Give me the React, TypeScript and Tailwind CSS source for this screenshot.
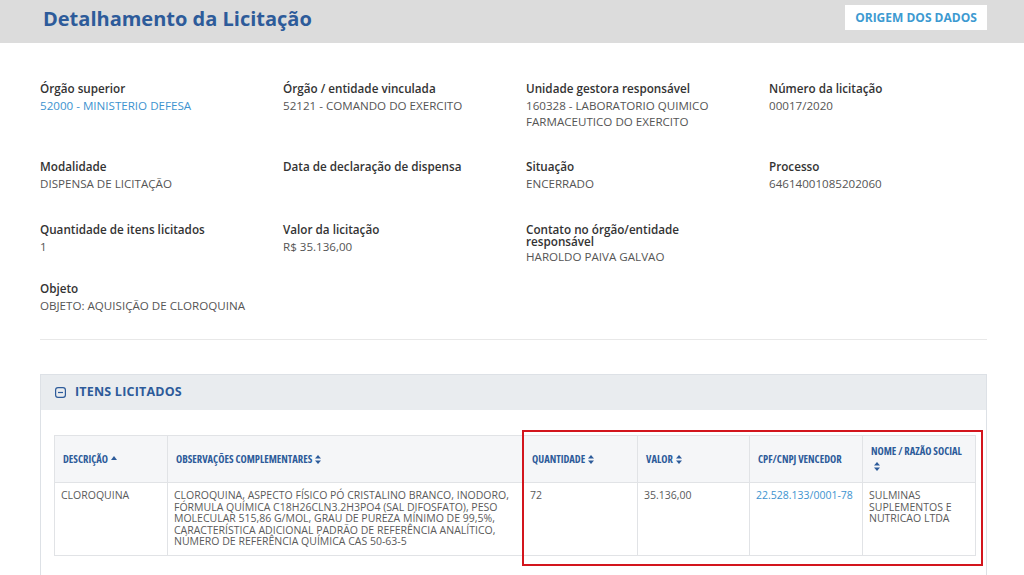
import React from "react";

type Field = { label: string; value?: string; link?: boolean; tight?: boolean; wide?: boolean };

const rows: { mt: string; fields: (Field | null)[] }[] = [
  {
    mt: "mt-[37px]",
    fields: [
      { label: "Órgão superior", value: "52000 - MINISTERIO DEFESA", link: true },
      { label: "Órgão / entidade vinculada", value: "52121 - COMANDO DO EXERCITO" },
      { label: "Unidade gestora responsável", value: "160328 - LABORATORIO QUIMICO FARMACEUTICO DO EXERCITO" },
      { label: "Número da licitação", value: "00017/2020" },
    ],
  },
  {
    mt: "mt-[28px]",
    fields: [
      { label: "Modalidade", value: "DISPENSA DE LICITAÇÃO" },
      { label: "Data de declaração de dispensa" },
      { label: "Situação", value: "ENCERRADO" },
      { label: "Processo", value: "64614001085202060" },
    ],
  },
  {
    mt: "mt-[29px]",
    fields: [
      { label: "Quantidade de itens licitados", value: "1" },
      { label: "Valor da licitação", value: "R$ 35.136,00" },
      { label: "Contato no órgão/entidade responsável", value: "HAROLDO PAIVA GALVAO", tight: true },
      null,
    ],
  },
  {
    mt: "mt-[15px]",
    fields: [{ label: "Objeto", value: "OBJETO: AQUISIÇÃO DE CLOROQUINA", wide: true }],
  },
];

function SortIcon() {
  return (
    <svg width="6" height="9" viewBox="0 0 6 9" className="inline-block ml-[3px] align-[-1px]">
      <path d="M3 0 L6 3.6 L0 3.6 Z" fill="#2d5b9a" />
      <path d="M3 9 L6 5.4 L0 5.4 Z" fill="#2d5b9a" />
    </svg>
  );
}

function CaretUp() {
  return (
    <svg width="6" height="4" viewBox="0 0 6 4" className="inline-block ml-[3px] align-[3px]">
      <path d="M3 0 L6 4 L0 4 Z" fill="#2d5b9a" />
    </svg>
  );
}

const headCls =
  "border border-[#e1e3e6] bg-[#f5f6f8] px-[8px] text-left align-middle text-[10.5px] font-bold uppercase leading-[15px] text-[#2d5b9a] [font-stretch:condensed]";
const cellCls =
  "border border-[#e1e3e6] bg-white px-[6px] pt-[7px] align-top text-[10.5px] uppercase leading-[11.6px] text-[#5a5a5a]";

export default function App() {
  return (
    <div
      className="relative h-[575px] w-[1024px] overflow-hidden bg-white"
      style={{ fontFamily: '"Open Sans", "Liberation Sans", sans-serif' }}
    >
      <header className="flex h-[43px] items-start justify-between bg-[#dcdcdc] pl-[43px] pr-[37px]">
        <h1 className="mt-[5px] text-[20px] font-bold leading-[28px] text-[#2d5b9a]">
          Detalhamento da Licitação
        </h1>
        <button className="mt-[5px] h-[25px] w-[142px] bg-white text-[12px] font-bold text-[#3d9ad1]">
          ORIGEM DOS DADOS
        </button>
      </header>

      <main className="pl-[40px] pr-[37px]">
        {rows.map((row, i) => (
          <div key={i} className={`grid w-[972px] grid-cols-4 ${row.mt}`}>
            {row.fields.map((f, j) =>
              f ? (
                <div key={j} className={f.wide ? "col-span-2" : "pr-[30px]"}>
                  <p
                    className={`text-[11.7px] font-semibold text-[#333] ${
                      f.tight ? "leading-[12px] pt-[2px]" : "leading-[16px]"
                    }`}
                  >
                    {f.label}
                  </p>
                  {f.value && (
                    <p
                      className={`mt-[2px] text-[11.6px] leading-[16px] ${
                        f.link ? "text-[#3d93cf]" : "text-[#555]"
                      }`}
                    >
                      {f.value}
                    </p>
                  )}
                </div>
              ) : (
                <div key={j} />
              )
            )}
          </div>
        ))}

        <div className="mt-[25px] border-t border-[#e8e8e8]" />

        <section className="mt-[34px] border border-[#dde1e6]">
          <div className="flex h-[35px] items-center gap-[9px] bg-[#e9ecef] pl-[14px]">
            <svg width="11" height="11" viewBox="0 0 11 11">
              <rect x="0.6" y="0.6" width="9.8" height="9.8" rx="2.4" fill="none" stroke="#2d5b9a" strokeWidth="1.2" />
              <path d="M3 5.5 H8" stroke="#2d5b9a" strokeWidth="1.2" />
            </svg>
            <span className="text-[12.5px] font-bold tracking-[0.2px] text-[#2d5b9a]">ITENS LICITADOS</span>
          </div>
          <div className="pb-[40px] pl-[13px] pr-[11px] pt-[25px]">
            <table className="w-[921px] table-fixed border-collapse">
              <colgroup>
                <col className="w-[113px]" />
                <col className="w-[356px]" />
                <col className="w-[114px]" />
                <col className="w-[112px]" />
                <col className="w-[113px]" />
                <col className="w-[113px]" />
              </colgroup>
              <thead>
                <tr className="h-[47px]">
                  <th className={headCls}>
                    Descrição
                    <CaretUp />
                  </th>
                  <th className={headCls}>
                    Observações complementares
                    <SortIcon />
                  </th>
                  <th className={headCls}>
                    Quantidade
                    <SortIcon />
                  </th>
                  <th className={headCls}>
                    Valor
                    <SortIcon />
                  </th>
                  <th className={headCls}>CPF/CNPJ vencedor</th>
                  <th className={headCls}>
                    Nome / Razão social
                    <br />
                    <SortIcon />
                  </th>
                </tr>
              </thead>
              <tbody>
                <tr className="h-[73px]">
                  <td className={cellCls}>Cloroquina</td>
                  <td className={cellCls}>
                    CLOROQUINA, ASPECTO FÍSICO PÓ CRISTALINO BRANCO, INODORO, FÓRMULA QUÍMICA C18H26CLN3.2H3PO4 (SAL
                    DIFOSFATO), PESO MOLECULAR 515,86 G/MOL, GRAU DE PUREZA MÍNIMO DE 99,5%, CARACTERÍSTICA ADICIONAL
                    PADRÃO DE REFERÊNCIA ANALÍTICO, NÚMERO DE REFERÊNCIA QUÍMICA CAS 50-63-5
                  </td>
                  <td className={cellCls}>72</td>
                  <td className={cellCls}>35.136,00</td>
                  <td className={`${cellCls} !text-[#3d93cf]`}>22.528.133/0001-78</td>
                  <td className={cellCls}>SULMINAS SUPLEMENTOS E NUTRICAO LTDA</td>
                </tr>
              </tbody>
            </table>
          </div>
        </section>
      </main>

      <div className="pointer-events-none absolute left-[522px] top-[430px] h-[136px] w-[461px] border-2 border-[#d3151d]" />
    </div>
  );
}
